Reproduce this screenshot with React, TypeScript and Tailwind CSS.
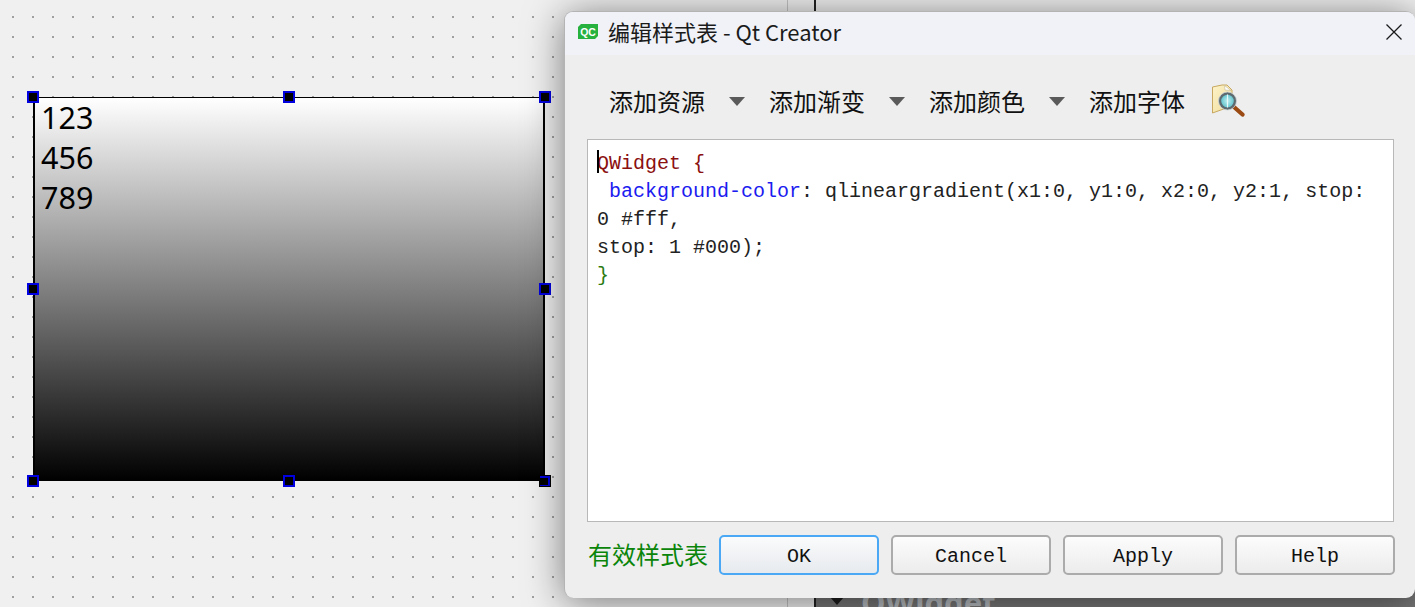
const cjk = "font-['Noto_Sans_CJK_SC','Noto_Sans',sans-serif]";

function Handle({ className }: { className: string }) {
  return <div className={`absolute w-3 h-3 bg-black border-2 border-[#0000e0] ${className}`} />;
}

function Caret() {
  return <div className="w-0 h-0 shrink-0 border-l-[8px] border-r-[8px] border-t-[9px] border-l-transparent border-r-transparent border-t-[#5a5a5a]" />;
}

function Tool({ label }: { label: string }) {
  return (
    <div className="w-[160px] flex items-center gap-6">
      <span className={`text-[24px] leading-8 text-[#111] w-[96px] shrink-0 whitespace-nowrap ${cjk}`}>{label}</span>
      <Caret />
    </div>
  );
}

function Btn({ label, primary }: { label: string; primary?: boolean }) {
  return (
    <button
      className={`w-[160px] h-10 pt-[3px] rounded-[5px] border-2 text-[20px] font-['Liberation_Mono',monospace] text-[#111] ${
        primary
          ? "border-[#4aa8f5] bg-linear-to-b from-[#fbfbfc] to-[#e6eaee]"
          : "border-[#ababab] bg-linear-to-b from-[#fcfcfc] to-[#ececec]"
      }`}
    >
      {label}
    </button>
  );
}

function FindIcon() {
  return (
    <svg width="34" height="34" viewBox="0 0 34 34" className="shrink-0">
      <defs>
        <linearGradient id="pg" x1="0" y1="0" x2="1" y2="1">
          <stop offset="0" stopColor="#fdf3c8" />
          <stop offset="1" stopColor="#f0dc9c" />
        </linearGradient>
        <radialGradient id="ln" cx="0.5" cy="0.5" r="0.6">
          <stop offset="0" stopColor="#bfeef0" />
          <stop offset="1" stopColor="#3fb4c0" />
        </radialGradient>
      </defs>
      <path d="M1.5 3 L11 1 L16 1 L21 6 L21 22 L1.5 29 Z" fill="url(#pg)" stroke="#c8a860" strokeWidth="1" />
      <path d="M13.5 1.5 L14 6 L20 6.5 Z" fill="#ffffff" stroke="#c8c0a0" strokeWidth="0.7" />
      <line x1="23" y1="23" x2="31.5" y2="30.5" stroke="#9a4a12" strokeWidth="4.2" strokeLinecap="round" />
      <circle cx="16.5" cy="17" r="7.6" fill="url(#ln)" stroke="#5d6a70" strokeWidth="2.6" />
      <circle cx="16.5" cy="17" r="9" fill="none" stroke="#c8d0d4" strokeWidth="0.8" />
      <line x1="16.5" y1="10.5" x2="16.5" y2="23.5" stroke="#e8fafa" strokeWidth="1.2" />
    </svg>
  );
}

function QcLogo() {
  return (
    <svg width="20" height="15" viewBox="0 0 20 15" className="shrink-0">
      <path d="M3 0 L20 0 L20 12 L17 15 L0 15 L0 3 Z" fill="#27b13f" />
      <text x="10" y="11.5" textAnchor="middle" fontSize="10.5" fontWeight="700" fill="#ffffff" fontFamily="Liberation Sans, sans-serif">QC</text>
    </svg>
  );
}

export default function App() {
  return (
    <div className="relative w-[1415px] h-[607px] overflow-hidden flex bg-[#f0f0f0]">
      {/* form canvas */}
      <div className="relative w-[787px] h-full shrink-0 bg-[#a0a0a0] bg-[linear-gradient(90deg,#f0f0f0_18px,transparent_18px),linear-gradient(#f0f0f0_18px,transparent_18px)] [background-size:20px_20px] [background-position:-6px_-2px]">
        <div className="absolute left-[33px] top-[97px] w-[512px] h-[384px] border-x-2 border-t border-black bg-[linear-gradient(#ffffff,#000000)] pl-[6px] font-['Noto_Sans',sans-serif] text-[30.5px] leading-10 text-black">
          <div className="-mt-px">123</div>
          <div>456</div>
          <div>789</div>
        </div>
        <Handle className="left-[27px] top-[91px]" />
        <Handle className="left-[283px] top-[91px]" />
        <Handle className="left-[539px] top-[91px]" />
        <Handle className="left-[27px] top-[283px]" />
        <Handle className="left-[539px] top-[283px]" />
        <Handle className="left-[27px] top-[475px]" />
        <Handle className="left-[283px] top-[475px]" />
        <div className="absolute left-[539px] top-[475px] w-3 h-3 border border-black bg-black">
          <div className="w-full h-full bg-black border-t-2 border-r-2 border-b border-[#0000e0]" />
        </div>
      </div>

      {/* side strip */}
      <div className="w-[29px] h-full shrink-0 border-l border-[#c4c4c4] border-r-2 border-r-[#222] bg-[#f0f0f0]" />

      {/* property panel */}
      <div className="flex-1 h-full flex flex-col justify-end bg-[#f0f0f0]">
        <div className="h-[30px] bg-[#767676] flex items-start gap-[17px] pl-[14px] overflow-hidden">
          <div className="mt-[20px] w-0 h-0 border-l-[7px] border-r-[7px] border-t-[8px] border-l-transparent border-r-transparent border-t-[#1c1c1c]" />
          <span className="mt-[5px] font-['Noto_Sans',sans-serif] font-bold text-[31px] leading-10 text-[#b8bcc0]">QWidget</span>
        </div>
      </div>

      {/* dialog */}
      <div className="absolute left-[564px] top-[11px] w-[851px] h-[587px] rounded-[9px] border-t border-l border-[#b4b4b4] bg-[#eeeeee] shadow-[0_4px_38px_rgba(0,0,0,0.5)] overflow-hidden flex flex-col">
        <div className="h-[43px] shrink-0 bg-[#f0f2f8] flex items-center pl-[13px] pr-[14px] pb-1">
          <QcLogo />
          <span className={`ml-[10px] text-[22px] text-[#1a1a1a] whitespace-nowrap ${cjk}`}>编辑样式表 - Qt Creator</span>
          <svg width="16" height="16" viewBox="0 0 16 16" className="ml-auto -mr-px">
            <path d="M0.5 0.5 L15.5 15.5 M15.5 0.5 L0.5 15.5" stroke="#1a1a1a" strokeWidth="1.3" />
          </svg>
        </div>

        <div className="h-[84px] shrink-0 flex items-center pl-11 pt-[8px]">
          <Tool label="添加资源" />
          <Tool label="添加渐变" />
          <Tool label="添加颜色" />
          <span className={`text-[24px] leading-8 text-[#111] w-[122px] shrink-0 whitespace-nowrap ${cjk}`}>添加字体</span>
          <FindIcon />
        </div>

        <div className="relative ml-[22px] w-[807px] h-[383px] shrink-0 bg-white border border-[#b8b8b8] px-[9px] pt-[10px] font-['Liberation_Mono',monospace] text-[20px] leading-7 text-[#222] whitespace-pre">
          <div className="absolute left-[9px] top-[10px] w-[2px] h-[23px] bg-black" />
          <div className="text-[#8b1010]">QWidget {"{"}</div>
          <div>
            {" "}
            <span className="text-[#1c1cf0]">background-color</span>: qlineargradient(x1:0, y1:0, x2:0, y2:1, stop:
          </div>
          <div>0 #fff,</div>
          <div>stop: 1 #000);</div>
          <div className="text-[#2a7a10]">{"}"}</div>
        </div>

        <div className="flex items-center pl-[23px] pt-[13px]">
          <span className={`w-[131px] shrink-0 text-[24px] leading-8 text-[#0a850a] mb-[2px] whitespace-nowrap ${cjk}`}>有效样式表</span>
          <div className="flex gap-3">
            <Btn label="OK" primary />
            <Btn label="Cancel" />
            <Btn label="Apply" />
            <Btn label="Help" />
          </div>
        </div>
      </div>
    </div>
  );
}
